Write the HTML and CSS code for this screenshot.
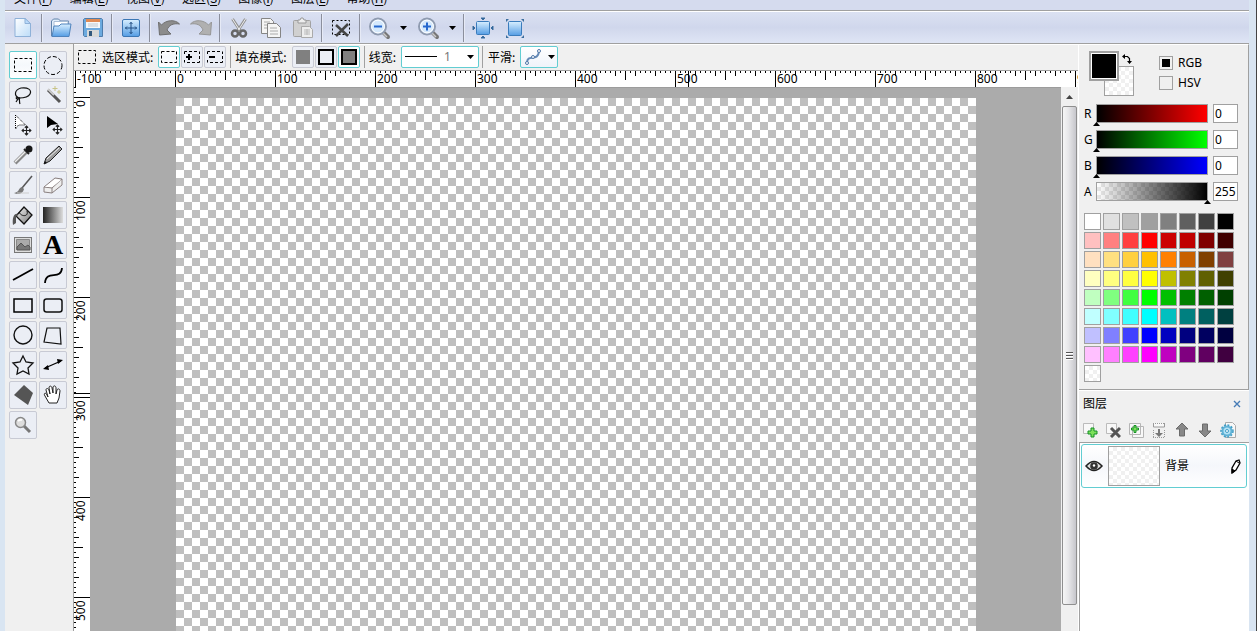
FILE: index.html
```html
<!DOCTYPE html>
<html lang="zh-CN">
<head>
<meta charset="utf-8">
<title>图像编辑器</title>
<link rel="stylesheet" href="styles.css">
</head>
<body>
<svg class="defs" aria-hidden="true">
  <defs>
    <linearGradient id="blue" x1="0" y1="0" x2="0" y2="1"><stop offset="0" stop-color="#d8efff"/><stop offset="1" stop-color="#559de4"/></linearGradient>
    <linearGradient id="paper" x1="0" y1="0" x2="1" y2="1"><stop offset="0" stop-color="#fff"/><stop offset="1" stop-color="#bcdcf8"/></linearGradient>
    <linearGradient id="gray" x1="0" y1="0" x2="1" y2="1"><stop offset="0" stop-color="#f4f4f4"/><stop offset="1" stop-color="#777"/></linearGradient>
    <linearGradient id="dark" x1="0" y1="0" x2="1" y2="0"><stop offset="0" stop-color="#222"/><stop offset="1" stop-color="#ddd"/></linearGradient>
    <symbol id="arrow" viewBox="0 0 7 4"><path d="M0 0h7L3.5 4z" fill="#000"/></symbol>
    <symbol id="marquee" viewBox="0 0 18 14"><rect x=".5" y=".5" width="17" height="13" fill="none" stroke="#000" stroke-dasharray="3 2"/></symbol>
    <symbol id="lens" viewBox="0 0 24 24"><path d="M16 16l5 5" stroke="#777" stroke-width="4" stroke-linecap="round"/><path d="M15 16l5 5" stroke="#ccc" stroke-width="1.5"/><circle cx="11" cy="10.500" r="8" fill="#d5e9fc" stroke="#8f9bb0" stroke-width="2"/><circle cx="11" cy="10.500" r="6.4" fill="none" stroke="#fff"/></symbol>
    <symbol id="move" viewBox="0 0 10 10"><path d="M5 1v8M1 5h8M3.5 2.5L5 1l1.500 1.500M3.500 7.500L5 9l1.500-1.500M2.500 3.500L1 5l1.500 1.500M7.500 3.500L9 5 7.500 6.500" fill="none" stroke="#222"/></symbol>
  </defs>
</svg>
<div class="window">
  <nav class="menu">
    <a href="#">文件(<u>F</u>)</a><a href="#">编辑(<u>E</u>)</a><a href="#">视图(<u>V</u>)</a><a href="#">选区(<u>S</u>)</a><a href="#">图像(<u>I</u>)</a><a href="#">图层(<u>L</u>)</a><a href="#">帮助(<u>H</u>)</a>
  </nav>
  <div class="toolbar">
    <button aria-label="新建"><svg viewBox="0 0 24 24"><path d="M4 2.500h10l5.500 5v13H4z" fill="url(#paper)" stroke="#8eb1d8"/><path d="M14 2.500v5h5.500z" fill="#b9dafb" stroke="#8eb1d8"/></svg></button>
    <i class="sep"></i>
    <button aria-label="打开"><svg viewBox="0 0 24 24"><path d="M2.500 20V5l2-2h5l2 2h8v15z" fill="#e1eefb" stroke="#6183aa"/><path d="M5 5.500h14v6H5z" fill="#fff" stroke="#a8bdd5"/><path d="M3 20.500L5 10h5l2-2h10l-2 12.500z" fill="url(#blue)" stroke="#4e83bd"/></svg></button>
    <button aria-label="保存"><svg viewBox="0 0 24 24"><path d="M3.500 2.500h17l1 1v17h-18l-1-1v-16z" fill="#6caadf" stroke="#4e7cab"/><path d="M5 3h14v9H5z" fill="#f5f8fa"/><path d="M5 3h14v3H5z" fill="#e08b55"/><path d="M7 8h10M7 10h10" stroke="#bfc9d1"/><path d="M6 14h12v7H6z" fill="#d8d8d8"/><path d="M8 15h3v5H8z" fill="#31587d"/></svg></button>
    <i class="sep"></i>
    <button aria-label="画布大小"><svg viewBox="0 0 24 24"><rect x="3.500" y="3.500" width="17" height="17" rx="1.500" fill="url(#blue)" stroke="#3b76b4"/><path d="M12 6v12M6 12h12M10.500 8L12 6.500 13.500 8M10.500 16l1.500 1.500 1.500-1.500M8 10.500L6.500 12 8 13.500M16 10.500l1.500 1.500-1.500 1.500" stroke="#234f83" fill="none"/></svg></button>
    <i class="sep"></i>
    <button aria-label="撤销"><svg viewBox="0 0 24 24"><path d="M1.500 6l3 3C9 4 18 3 22.500 8 16 7 12 9 10 14l4 4-11.500 1z" fill="#8c8c8c" stroke="#6e6e6e"/></svg></button>
    <button aria-label="重做"><svg viewBox="0 0 24 24"><path d="M22.500 6l-3 3C15 4 6 3 1.500 8 8 7 12 9 14 14l-4 4 11.500 1z" fill="#b0b0b0" stroke="#969696"/></svg></button>
    <i class="sep"></i>
    <button aria-label="剪切"><svg viewBox="0 0 24 24"><path d="M5.500 3l8 12M18.500 3l-8 12" stroke="#929292" stroke-width="3"/><path d="M5.500 3l7 11M18.500 3l-7 11" stroke="#eee"/><g fill="none" stroke="#666" stroke-width="2.500"><circle cx="8" cy="17.500" r="3"/><circle cx="16" cy="17.500" r="3"/></g></svg></button>
    <button aria-label="复制"><svg viewBox="0 0 24 24"><g fill="#f5f5f5" stroke="#858585"><path d="M2.500 2.500h9l3 3v12h-12z"/><path d="M8.500 7.500h9l4 4v10h-13z"/></g><path d="M5 6h6M5 9h3M5 12h3M11 12h7M11 15h8M11 18h8" stroke="#aaa"/></svg></button>
    <button aria-label="粘贴"><svg viewBox="0 0 24 24"><rect x="2.500" y="4.500" width="17" height="16" rx="1" fill="#d0d0d0" stroke="#a2a2a2"/><path d="M7 7V4h2l1-2h2l1 2h2v3z" fill="#eee" stroke="#999"/><path d="M10.500 10.500h8l3 3v8h-11z" fill="#eee" stroke="#aaa"/><path d="M13 14h6M13 16h6M13 18h6M16 13v6" stroke="#bbb"/></svg></button>
    <i class="sep"></i>
    <button aria-label="取消选区"><svg viewBox="0 0 24 24"><rect x="3.500" y="4.500" width="17" height="14" fill="none" stroke="#000" stroke-dasharray="2 2"/><path d="M7 9l12 11M19 8L7 20" stroke="#444" stroke-width="2.500"/></svg></button>
    <i class="sep"></i>
    <button aria-label="缩小"><svg viewBox="0 0 24 24"><use href="#lens"/><path d="M7 10.500h8" stroke="#2769ce" stroke-width="2"/></svg></button>
    <button class="drop" aria-label="缩小选项"><svg><use href="#arrow"/></svg></button>
    <button aria-label="放大"><svg viewBox="0 0 24 24"><use href="#lens"/><path d="M7 10.500h8M11 6.500v8" stroke="#2769ce" stroke-width="2"/></svg></button>
    <button class="drop" aria-label="放大选项"><svg><use href="#arrow"/></svg></button>
    <i class="sep"></i>
    <button aria-label="适合窗口"><svg viewBox="0 0 24 24"><rect x="5.500" y="5.500" width="13" height="13" rx="1" fill="url(#blue)" stroke="#3b7cbc"/><path d="M10 2h4l-2 2zM10 22h4l-2-2zM2 10v4l2-2zM22 10v4l-2-2z" fill="#285f99" stroke="#3c6f9f"/></svg></button>
    <button aria-label="实际大小"><svg viewBox="0 0 24 24"><rect x="5.500" y="5.500" width="13" height="14" rx="1" fill="url(#blue)" stroke="#3b7cbc"/><path d="M3 6V3h3zM18 3h3v3zM3 19v3h3zM21 19v3h-3z" fill="#3c6f9f"/></svg></button>
  </div>
  <div class="work">
    <aside class="tools">
      <button class="on" aria-label="矩形选区"><svg viewBox="0 0 24 24"><rect x="3.500" y="5.500" width="17" height="13" fill="none" stroke="#000" stroke-dasharray="3 2"/></svg></button>
      <button aria-label="椭圆选区"><svg viewBox="0 0 24 24"><circle cx="12" cy="12.500" r="9" fill="none" stroke="#000" stroke-dasharray="4 2"/></svg></button>
      <button aria-label="套索"><svg viewBox="0 0 24 24"><path d="M8 15c-5-2-5-8 2-10 7-1 11 2 9 6-2 4-7 4-11 4M8 15c-3-2-4 1-1 1s2-2 1-1c1 2 0 4 1 6M7 16l-2 3" fill="none" stroke="#111" stroke-width="1.200"/></svg></button>
      <button aria-label="魔棒"><svg viewBox="0 0 24 24"><path d="M7 7l12 12" stroke="#555" stroke-width="3"/><path d="M7 6l6 6" stroke="#ccc" stroke-width="2"/><path d="M14 3v5M11.500 5.500h5M16 9h4M18 7v4" stroke="#c7c386"/></svg></button>
      <button aria-label="移动选区"><svg viewBox="0 0 24 24"><path d="M4.500 2v14l3-4h7z" fill="#fff" stroke="#000" stroke-dasharray="1 1"/><use href="#move" x="10" y="12" width="11" height="11"/></svg></button>
      <button aria-label="移动像素"><svg viewBox="0 0 24 24"><path d="M6 3v12l4-3 7-1z" fill="#000"/><use href="#move" x="11" y="11" width="11" height="11"/></svg></button>
      <button aria-label="吸管"><svg viewBox="0 0 24 24"><path d="M4 20L15 9" stroke="#888" stroke-width="4"/><path d="M4 19L15 8" stroke="#eee" stroke-width="1.500"/><path d="M13 6l5 5" stroke="#222" stroke-width="2"/><circle cx="18" cy="6" r="3.500" fill="#171717"/></svg></button>
      <button aria-label="铅笔"><svg viewBox="0 0 24 24"><path d="M3 21l2-6L18 3l3 3L9 18z" fill="#999" stroke="#222"/><path d="M6 16L18 5" stroke="#eee"/><path d="M3 21l1-3 2 2z" fill="#111"/></svg></button>
      <button aria-label="画笔"><svg viewBox="0 0 24 24"><path d="M21 3L11 15" stroke="#555" stroke-width="1.500"/><path d="M11 14c-4 1-2 5-8 6 4 2 9 1 10-4z" fill="#777"/><path d="M6 20h12" stroke="#ccc"/></svg></button>
      <button aria-label="橡皮"><svg viewBox="0 0 24 24"><path d="M3 14L14 5l7 1v6l-10 8-8-1z" fill="#eee" stroke="#8a8080"/><path d="M3 14l8 1L21 6M11 15v5" fill="none" stroke="#8a8080"/><path d="M4 14L14 6l6 1-9 7z" fill="#fff"/></svg></button>
      <button aria-label="油漆桶"><svg viewBox="0 0 24 24"><path d="M13 4l8 8-8 9-8-8z" fill="url(#gray)" stroke="#111" stroke-width="1.300"/><path d="M8 9c2 5 10 5 8-1" fill="none" stroke="#111"/><path d="M7 11c-4-1-6 4-5 11l3-2V14z" fill="#555"/></svg></button>
      <button aria-label="渐变"><svg viewBox="0 0 24 24"><path d="M2 4h20v16H2z" fill="url(#dark)"/></svg></button>
      <button aria-label="图片"><svg viewBox="0 0 24 24"><rect x="3.500" y="4.500" width="17" height="15" fill="#ddd" stroke="#777"/><path d="M5.500 6.500h13v10h-13z" fill="#aaa" stroke="#888"/><path d="M6 14l4-4 4 4 3-2 2 2v3H6z" fill="#777" stroke="#555"/></svg></button>
      <button class="letter" aria-label="文字">A</button>
      <button aria-label="直线"><svg viewBox="0 0 24 24"><path d="M2 17L22 6" stroke="#000" stroke-width="1.800"/></svg></button>
      <button aria-label="曲线"><svg viewBox="0 0 24 24"><path d="M4 20c1-14 16-2 17-15" fill="none" stroke="#000" stroke-width="1.800"/></svg></button>
      <button aria-label="矩形"><svg viewBox="0 0 24 24"><path d="M3 6h18v13H3z" fill="none" stroke="#000" stroke-width="1.500"/></svg></button>
      <button aria-label="圆角矩形"><svg viewBox="0 0 24 24"><rect x="3" y="6" width="18" height="13" rx="2.500" fill="none" stroke="#111" stroke-width="1.500"/></svg></button>
      <button aria-label="椭圆"><svg viewBox="0 0 24 24"><circle cx="12" cy="12" r="9" fill="none" stroke="#111" stroke-width="1.400"/></svg></button>
      <button aria-label="多边形"><svg viewBox="0 0 24 24"><path d="M6 5h13l1 16-17-2z" fill="none" stroke="#111" stroke-width="1.200"/></svg></button>
      <button aria-label="星形"><svg viewBox="0 0 24 24"><path d="M12 3l3 6 7 1-5 5 1 6-6-3-6 3 1-6-5-5 7-1z" fill="none" stroke="#111" stroke-width="1.300"/></svg></button>
      <button aria-label="箭头"><svg viewBox="0 0 24 24"><path d="M4 15l16-7" stroke="#000" stroke-width="1.300"/><path d="M2 16l5-4 1 5zM22 7l-5 4-1-5z" fill="#000"/></svg></button>
      <button aria-label="任意形状"><svg viewBox="0 0 24 24"><path d="M13 2l9 8-5 12L3 12z" fill="#555"/></svg></button>
      <button aria-label="抓手"><svg viewBox="0 0 24 24"><path d="M8 20l-4-7c-2-3 1-4 2-1l1 2-2-7c0-2 2-2 3 0l1 4-1-6c0-3 3-2 3 0l1 5V4c1-2 3-1 3 1v6l1-4c1-2 3-1 3 1l-1 7-2 5z" fill="#fff" stroke="#222"/></svg></button>
      <button aria-label="缩放"><svg viewBox="0 0 24 24"><path d="M13 13l6 6" stroke="#777" stroke-width="3"/><circle cx="9.500" cy="9.500" r="5" fill="#ddd" stroke="#888" stroke-width="1.500"/><path d="M7 8q2-2 4-1" stroke="#fff" fill="none" stroke-width="2"/></svg></button>
    </aside>
    <main class="editor">
      <div class="options">
        <svg class="current"><use href="#marquee"/></svg>
        <span class="caption">选区模式:</span>
        <div class="group">
          <button class="on" aria-label="新选区"><svg viewBox="0 0 18 18"><rect x="1.500" y="3.500" width="15" height="11" fill="none" stroke="#000" stroke-dasharray="3 2"/></svg></button>
          <button aria-label="添加选区"><svg viewBox="0 0 18 18"><path d="M1.500 6V3.500H4M6 3.500h3M11 3.500h3M16.500 3.500V6M16.500 8v3M16.500 13v1.500H14M12 14.500H9M7 14.500H4M1.500 14.500V12" fill="none" stroke="#000"/><path d="M3 9h6M6 6v6" stroke="#000" stroke-width="2"/></svg></button>
          <button aria-label="减去选区"><svg viewBox="0 0 18 18"><path d="M1.500 6V3.500H4M6 3.500h3M11 3.500h3M16.500 3.500V6M16.500 8v3M16.500 13v1.500H14M12 14.500H9M7 14.500H4M1.500 14.500V12" fill="none" stroke="#000"/><path d="M3 9h6" stroke="#000" stroke-width="2"/></svg></button>
        </div>
        <i class="rule"></i>
        <span class="caption">填充模式:</span>
        <div class="group">
          <button aria-label="填充"><svg viewBox="0 0 18 18"><path d="M2 2h14v14H2z" fill="#808080"/></svg></button>
          <button aria-label="描边"><svg viewBox="0 0 18 18"><path d="M2 2h14v14H2z" fill="#eceff6" stroke="#000" stroke-width="2"/></svg></button>
          <button class="on" aria-label="填充和描边"><svg viewBox="0 0 18 18"><path d="M2 2h14v14H2z" fill="#808080" stroke="#000" stroke-width="2"/></svg></button>
        </div>
        <i class="rule"></i>
        <label class="caption" for="stroke">线宽:</label>
        <div class="combo">
          <svg class="stroke" viewBox="0 0 32 1"><path d="M0 0h32v1H0z"/></svg>
          <select id="stroke"><option>1</option><option>2</option><option>3</option></select>
          <svg class="arrow"><use href="#arrow"/></svg>
        </div>
        <i class="rule tight"></i>
        <span class="caption">平滑:</span>
        <button class="smooth" aria-label="平滑"><svg class="curve" viewBox="0 0 18 18"><path d="M3 15c0-10 11 0 12-12" fill="none" stroke="#6489b6" stroke-width="2"/><g fill="#fff" stroke="#5178a8"><circle cx="3" cy="15" r="1.500"/><circle cx="9" cy="9" r="1.500"/><circle cx="15" cy="3" r="1.500"/></g></svg><svg class="arrow"><use href="#arrow"/></svg></button>
      </div>
      <div class="ruler-h"><span>-100</span><span>0</span><span>100</span><span>200</span><span>300</span><span>400</span><span>500</span><span>600</span><span>700</span><span>800</span><span>900</span><i class="mark"></i></div>
      <div class="stage">
        <div class="ruler-v"><span>0</span><span>100</span><span>200</span><span>300</span><span>400</span><span>500</span><i class="mark"></i></div>
        <div class="viewport"><div class="canvas"></div></div>
        <div class="scroll"><button aria-label="向上滚动"><svg viewBox="0 0 7 4"><path d="M0 4h7L3.500 0z" fill="#444"/></svg></button><div class="thumb"><i></i><i></i><i></i></div><div class="rest"></div></div>
      </div>
    </main>
    <aside class="side">
      <section class="colors">
        <div class="head">
          <div class="pair"><button class="back" aria-label="背景色"></button><button class="fore" aria-label="前景色"></button></div>
          <button class="swap" aria-label="交换颜色"><svg viewBox="0 0 12 12"><path d="M3 3.500h3.500l2 2V9" fill="none" stroke="#000" stroke-width="1.200"/><path d="M1 3.500L4 1v5zM6 8h5l-2.500 3z"/></svg></button>
          <div class="modes"><label><input type="radio" name="mode" checked>RGB</label><label><input type="radio" name="mode">HSV</label></div>
        </div>
        <div class="channel"><label for="r">R</label><div class="track red"><input id="r" type="range" min="0" max="255" value="0"></div><input class="num" type="text" value="0" aria-label="R"></div>
        <div class="channel"><label for="g">G</label><div class="track green"><input id="g" type="range" min="0" max="255" value="0"></div><input class="num" type="text" value="0" aria-label="G"></div>
        <div class="channel"><label for="b">B</label><div class="track blue"><input id="b" type="range" min="0" max="255" value="0"></div><input class="num" type="text" value="0" aria-label="B"></div>
        <div class="channel"><label for="a">A</label><div class="track alpha"><input id="a" type="range" min="0" max="255" value="255"></div><input class="num" type="text" value="255" aria-label="A"></div>
        <div class="palette" id="palette"></div>
      </section>
      <section class="layers">
        <header><h2>图层</h2><button class="close" aria-label="关闭"><svg viewBox="0 0 8 8"><path d="M1 1l6 6M7 1L1 7" stroke="#477cb6" stroke-width="1.400"/></svg></button></header>
        <div class="actions">
          <button aria-label="新建图层"><svg viewBox="0 0 16 16"><path d="M1.500 1.500h10v10h-10z" fill="#f8f8f8" stroke="#bbb"/><path d="M9 6h3v3h3v3h-3v3H9v-3H6V9h3z" fill="#7de05b" stroke="#159126"/></svg></button>
          <button aria-label="删除图层"><svg viewBox="0 0 16 16"><path d="M1.500 1.500h10v10h-10z" fill="#f8f8f8" stroke="#bbb"/><path d="M6 6l9 9M15 6l-9 9" stroke="#555" stroke-width="3"/></svg></button>
          <button aria-label="复制图层"><svg viewBox="0 0 16 16"><path d="M4.500 4.500h11v11h-11zM1.500 1.500h11v11h-11z" fill="#f8f8f8" stroke="#b5b5b5"/><path d="M6 3.500h2V6h2.500v2H8v2.500H6V8H3.500V6H6z" fill="#7de05b" stroke="#159126"/></svg></button>
          <button aria-label="合并图层"><svg viewBox="0 0 16 16"><path d="M2.500 1v4h11V1" fill="#f8f8f8" stroke="#999"/><path d="M2 1.500h12M2 15.500h12M2.500 8v8M13.500 8v8" stroke="#999" stroke-dasharray="1 1"/><path d="M7 7h2v4h3l-4 4-4-4h3z" fill="#777"/></svg></button>
          <button aria-label="上移图层"><svg viewBox="0 0 16 16"><path d="M8 1l6 6h-3.500v7h-5V7H2z" fill="#888" stroke="#6b6b6b"/></svg></button>
          <button aria-label="下移图层"><svg viewBox="0 0 16 16"><path d="M8 15l6-6h-3.500V2h-5v7H2z" fill="#888" stroke="#6b6b6b"/></svg></button>
          <button aria-label="图层属性"><svg viewBox="0 0 16 16"><path d="M5.500.500h7l3 3v12h-10z" fill="#f8f8f8" stroke="#aaa"/><circle cx="7" cy="9" r="4.500" fill="#b5e2f5" stroke="#5fb2d6" stroke-width="2"/><circle cx="7" cy="9" r="6" fill="none" stroke="#3f9dc6" stroke-width="1.500" stroke-dasharray="2 1.500"/><circle cx="7" cy="9" r="1.500" fill="#fff" stroke="#3f9dc6"/></svg></button>
        </div>
        <div class="list">
          <div class="layer"><svg class="eye" viewBox="0 0 18 12"><path d="M1 6q8-9 16 0-8 9-16 0z" fill="#ddd" stroke="#222" stroke-width="1.500"/><circle cx="9" cy="6" r="3.800" fill="#333"/><circle cx="9" cy="5.500" r="1.200" fill="#fff"/></svg><div class="preview"></div><span>背景</span><svg class="pen" viewBox="0 0 10 15"><path d="M1 14V9l4-7 3-1 1 3-4 7z" fill="#fff" stroke="#000" stroke-width="1.300"/><path d="M1 14v-4l3 2zM5 2l3 2" stroke="#000"/></svg></div>
        </div>
      </section>
    </aside>
  </div>
</div>
<script src="palette.js"></script>
</body>
</html>
```
FILE: palette.js
```js
const colors = `#fff #e0e0e0 #c0c0c0 #a0a0a0 #808080 #606060 #404040 #000
#ffc0c0 #ff8080 #ff4040 #f00 #cc0000 #c00000 #800000 #400000
#ffe0c0 #ffe080 #ffd040 #ffc000 #ff8000 #c86000 #804000 #804040
#ffffc0 #ffff80 #ffff40 #ff0 #c0c000 #808000 #606000 #404000
#c0ffc0 #80ff80 #40ff40 #0f0 #00c000 #008000 #006000 #004000
#c0ffff #80ffff #40ffff #0ff #00c0c0 #008080 #006060 #004040
#c0c0ff #8080ff #4040ff #00f #0000c0 #000080 #000060 #000040
#ffc0ff #ff80ff #ff40ff #f0f #c000c0 #800080 #600060 #400040`.split(/\s+/);
const palette = document.getElementById('palette');
for (const color of colors) {
  const swatch = document.createElement('button');
  swatch.style.backgroundColor = color;
  swatch.setAttribute('aria-label', color);
  palette.append(swatch);
}
const clear = document.createElement('button');
clear.className = 'clear';
clear.setAttribute('aria-label', '透明');
palette.append(clear);
```
FILE: styles.css
```css
* { box-sizing: border-box; }
:root {
  --teal: #62cdd2;
  --line: #a0a0a0;
  --panel: #f0f0f0;
}
body {
  margin: 0;
  height: 100vh;
  overflow: hidden;
  background: #d9e5f2;
  color: #000;
  font: 12px/16px "Noto Sans", "Noto Sans CJK SC", sans-serif;
}
button, input, select { font: inherit; color: inherit; margin: 0; padding: 0; }
button { display: flex; align-items: center; justify-content: center; border: 0; background: none; }
svg { display: block; flex: none; }
.defs { position: absolute; width: 0; height: 0; }
.window { display: flex; flex-direction: column; height: 100vh; padding: 0 7px 0 5px; border-right: 1px solid #444; }

.menu { display: flex; align-items: flex-end; gap: 17px; height: 11px; flex: none; padding: 0 9px 4px; background: #d5dbee; border-bottom: 1px solid var(--line); font-family: "Noto Sans CJK SC", sans-serif; }
.menu a { color: #000; text-decoration: none; white-space: nowrap; }
.menu u { text-underline-offset: 2px; }
.toolbar { display: flex; align-items: center; height: 33px; flex: none; padding-left: 2px; border-top: 1px solid #fff; border-bottom: 1px solid var(--line); background: linear-gradient(#dbe1f2, #d0d7ec 50%, #dfe5f5); }
.toolbar button { width: 32px; height: 28px; }
.toolbar svg { width: 24px; height: 24px; }
.toolbar .drop { width: 17px; }
.toolbar .drop svg, .arrow { width: 7px; height: 4px; }
.sep { width: 2px; height: 28px; margin: 0 2px; background: #8b8f9d; border-right: 1px solid #e6eaf6; }

.work { display: flex; flex: 1; min-height: 0; }
.tools { display: grid; grid-template-columns: 28px 28px; grid-auto-rows: 28px; align-content: start; gap: 2px; flex: none; width: 69px; padding: 7px 4px; background: var(--panel); border-right: 1px solid var(--line); }
.tools button, .group button { border: 1px solid #c8cad4; border-radius: 2px; background: #ebeef5; }
.tools svg { width: 24px; height: 24px; }
.tools .letter { font: bold 28px/26px "Liberation Serif", serif; }
.tools .on, .group .on { border-color: var(--teal); background: linear-gradient(#fff, #f5f8fc, #fff); }

.editor { display: flex; flex-direction: column; flex: 1; min-width: 0; background: #fff; }
.options { display: flex; align-items: center; height: 27px; flex: none; padding: 0 0 2px 4px; background: var(--panel); border-top: 1px solid #fff; border-bottom: 1px solid var(--line); }
.current { width: 18px; height: 14px; margin-right: 6px; }
.caption { margin-right: 5px; font-family: "Noto Sans CJK SC", sans-serif; white-space: nowrap; }
.group { display: flex; gap: 1px; }
.group button { width: 22px; height: 22px; }
.group svg { width: 18px; height: 18px; }
.rule { width: 1px; height: 22px; margin: 0 4px; background: var(--line); }
.rule.tight { margin: 0 5px 0 3px; }
.combo, .smooth { display: flex; align-items: center; height: 22px; border: 1px solid var(--teal); border-radius: 2px; background: #fff; }
.combo { width: 78px; padding: 0 4px 0 3px; }
.stroke { width: 32px; height: 1px; }
.combo select { flex: 1; min-width: 0; height: 18px; padding-left: 7px; border: 0; appearance: none; background: none; color: #777; }
.smooth { width: 38px; gap: 6px; background: linear-gradient(#fff, #eff3fa); }
.curve { width: 18px; height: 18px; }

.ruler-h, .ruler-v { position: relative; display: flex; flex: none; overflow: hidden; background-color: #fff; }
.ruler-h {
  height: 16px;
  padding-left: 1px;
  background-image: linear-gradient(90deg, #000 1px, transparent 1px), linear-gradient(90deg, #000 1px, transparent 1px), linear-gradient(90deg, #000 1px, transparent 1px), linear-gradient(90deg, #000 1px, transparent 1px);
  background-size: 5px 2px, 20px 5px, 50px 9px, 100px 16px;
  background-position: 1px 0;
  background-repeat: repeat-x;
}
.ruler-h span { flex: none; width: 100px; padding-left: 2px; }
.ruler-v {
  flex-direction: column;
  width: 16px;
  padding-top: 10px;
  background-image: linear-gradient(#000 1px, transparent 1px), linear-gradient(#000 1px, transparent 1px), linear-gradient(#000 1px, transparent 1px), linear-gradient(#000 1px, transparent 1px);
  background-size: 2px 5px, 5px 20px, 9px 50px, 16px 100px;
  background-position: 0 10px;
  background-repeat: repeat-y;
}
.ruler-v span { flex: none; height: 100px; padding-bottom: 3px; writing-mode: vertical-rl; transform: rotate(180deg); text-align: right; line-height: 14px; }
.mark { position: absolute; background: #000; }
.ruler-h .mark { left: 614px; top: 0; width: 1px; height: 100%; }
.ruler-v .mark { left: 0; top: 306px; width: 100%; height: 1px; }
.stage { display: flex; flex: 1; min-height: 0; }
.viewport { flex: 1; min-width: 0; overflow: hidden; padding: 10px 0 0 86px; background: #ababab; border-top: 1px solid #9c9c9c; }
.canvas { width: 800px; height: 600px; background: conic-gradient(#fff 25%, #bfbfbf 0 50%, #fff 0 75%, #bfbfbf 0) 0 0 / 16px 16px; }
.scroll { display: flex; flex-direction: column; flex: none; width: 17px; padding: 1px; background: #f0f0f0; }
.scroll button { height: 18px; flex: none; }
.scroll button svg { width: 7px; height: 4px; }
.thumb { display: flex; flex-direction: column; align-items: center; justify-content: center; gap: 2px; flex: 20; border: 1px solid #8f8f8f; border-radius: 2px; background: linear-gradient(90deg, #f6f6f6, #e8e8ea 40%, #c6c6cb); }
.thumb i { width: 7px; height: 1px; background: #555; box-shadow: 0 1px #fff; }
.rest { flex: 1; }

.side { display: flex; flex-direction: column; flex: none; width: 171px; background: var(--panel); border-left: 1px solid #fff; }
.colors { padding: 6px 10px 7px 5px; border-top: 1px solid #fff; border-right: 1px solid var(--line); border-bottom: 1px solid var(--line); }
.head { display: flex; padding: 0 0 8px 5px; }
.pair { position: relative; width: 45px; height: 45px; flex: none; }
.pair button { position: absolute; width: 30px; height: 30px; border: 1px solid var(--line); }
.pair .fore { left: 0; top: 0; border-width: 2px; background: #000; box-shadow: inset 0 0 0 1px #fff; }
.pair .back { right: 0; bottom: 0; }
.pair .back, .palette .clear, .preview { background: conic-gradient(#f0f0f0 25%, #fff 0 50%, #f0f0f0 0 75%, #fff 0) 0 0 / 8px 8px; }
.swap { width: 12px; height: 12px; margin: 2px 0 0 -13px; }
.swap svg { width: 12px; height: 12px; }
.modes { display: grid; gap: 4px; align-content: start; margin: 4px 0 0 26px; }
.modes label { display: flex; align-items: center; gap: 5px; }
.modes input { appearance: none; width: 14px; height: 14px; border: 1px solid var(--line); }
.modes input:checked { background: #000 content-box; padding: 2px; }
.channel { display: flex; align-items: center; height: 19px; margin-bottom: 7px; }
.channel label { width: 12px; }
.track { flex: 1; min-width: 0; height: 19px; margin-right: 5px; border: 1px solid var(--line); }
.red { background: linear-gradient(90deg, #000, #f00); }
.green { background: linear-gradient(90deg, #000, #0f0); }
.blue { background: linear-gradient(90deg, #000, #00f); }
.alpha { background: linear-gradient(90deg, transparent, #000), conic-gradient(#e8e8e8 25%, #fff 0 50%, #e8e8e8 0 75%, #fff 0) 0 0 / 8px 8px; }
.track input { display: block; appearance: none; width: calc(100% + 8px); height: 22px; margin: 0 -4px; background: none; }
.track input::-webkit-slider-runnable-track { height: 22px; }
.track input::-webkit-slider-thumb { appearance: none; width: 7px; height: 4px; margin-top: 17px; background: #000; clip-path: polygon(50% 0, 100% 100%, 0 100%); }
.num { width: 25px; height: 19px; padding-left: 1px; border: 1px solid var(--line); background: #fff; }
.palette { display: grid; grid-template-columns: repeat(8, 17px); grid-auto-rows: 17px; gap: 2px; padding-top: 5px; }
.palette button { border: 1px solid var(--line); }

.layers { display: flex; flex-direction: column; flex: 1; min-height: 0; border-top: 1px solid #fff; }
.layers header { display: flex; align-items: center; justify-content: space-between; height: 26px; padding: 0 8px 0 4px; }
.layers h2 { margin: 0; font: inherit; }
.close, .close svg { width: 8px; height: 8px; }
.actions { display: flex; gap: 7px; height: 25px; padding-left: 3px; align-items: center; }
.actions svg { width: 16px; height: 16px; }
.list { flex: 1; padding: 1px 2px 0 1px; border-top: 1px solid var(--line); border-left: 1px solid var(--line); background: #fff; }
.layer { display: flex; align-items: center; height: 44px; padding: 0 5px 0 3px; border: 1px solid var(--teal); border-radius: 3px; background: linear-gradient(#fff, #f5f7fb, #fff); }
.eye { width: 18px; height: 12px; margin-right: 5px; }
.preview { width: 52px; height: 40px; margin-right: 5px; border: 1px solid var(--line); }
.pen { width: 10px; height: 15px; margin-left: auto; }
```
